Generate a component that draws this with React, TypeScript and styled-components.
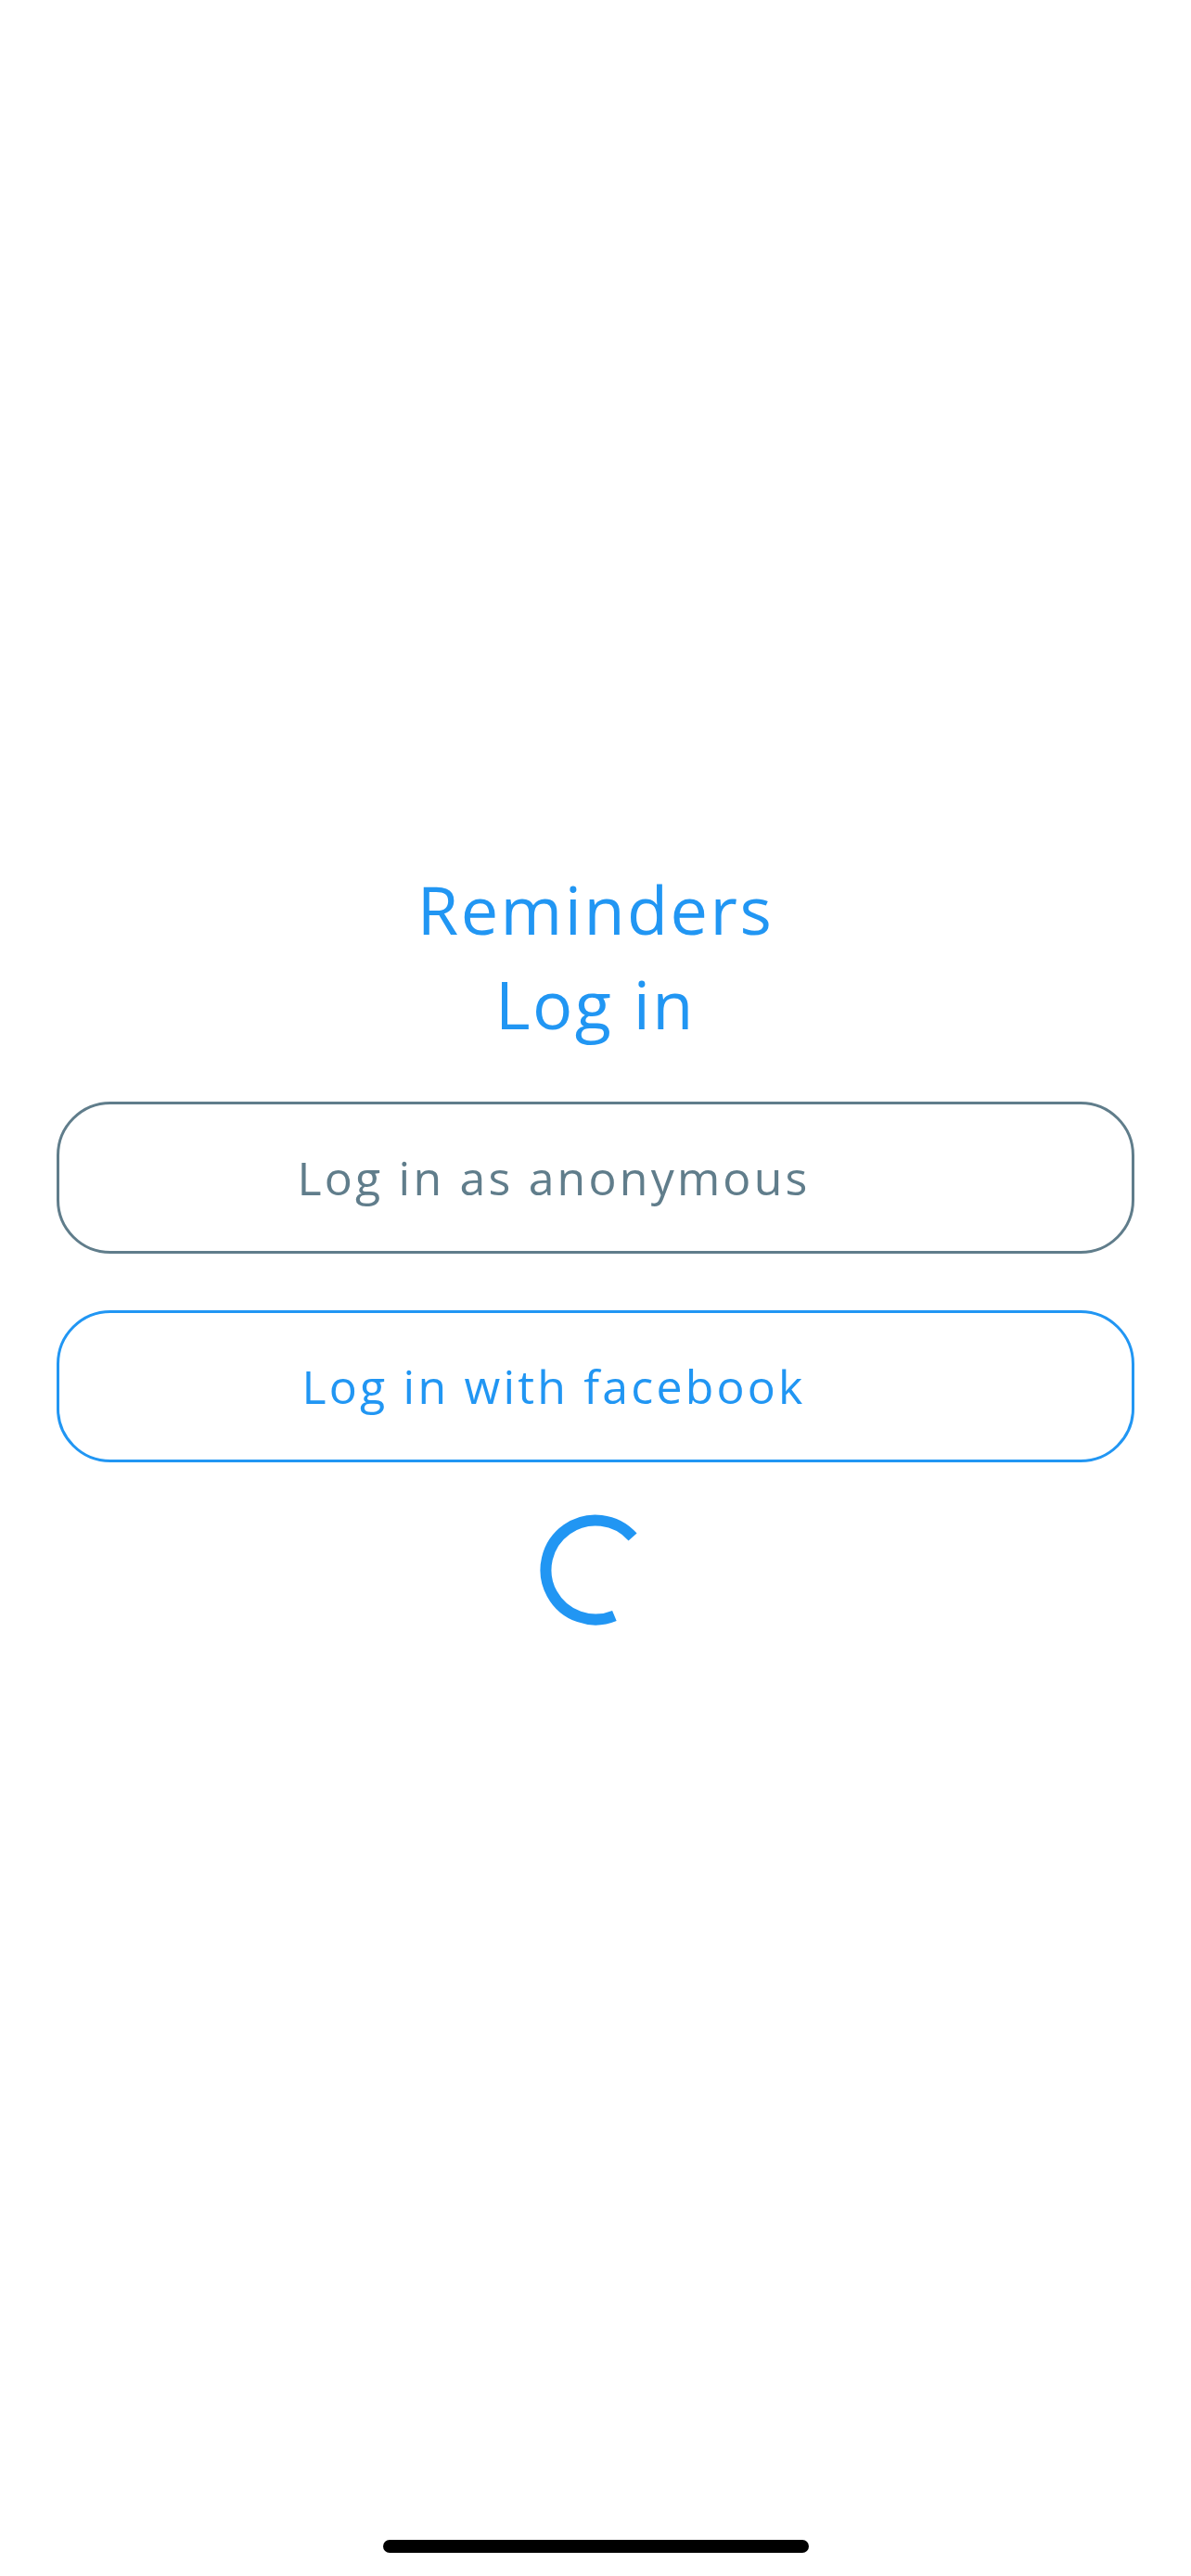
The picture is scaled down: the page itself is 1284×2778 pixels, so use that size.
import React from "react";
import styled, { createGlobalStyle } from "styled-components";

const GlobalStyle = createGlobalStyle`
  html, body {
    margin: 0;
    padding: 0;
    background: #ffffff;
  }
  body {
    font-family: "Open Sans", "Noto Sans", sans-serif;
  }
`;

const Page = styled.div`
  box-sizing: border-box;
  width: 1284px;
  height: 2778px;
  display: flex;
  flex-direction: column;
  align-items: center;
  padding-top: 929px;
  background: #ffffff;
`;

const Title = styled.h1`
  margin: 0;
  font-family: "Open Sans", "Noto Sans", sans-serif;
  font-weight: 500;
  font-size: 72px;
  line-height: 102px;
  letter-spacing: 2.5px;
  color: #2196f3;
  text-align: center;
`;

const Buttons = styled.div`
  margin-top: 55px;
  width: 1162px;
  display: flex;
  flex-direction: column;
  gap: 61px;
`;

const LoginButton = styled.button<{ $color: string }>`
  box-sizing: border-box;
  width: 100%;
  height: 164px;
  border: 3px solid ${(p) => p.$color};
  border-radius: 58px;
  background: #ffffff;
  color: ${(p) => p.$color};
  font-family: "Open Sans", "Noto Sans", sans-serif;
  font-weight: 400;
  font-size: 50px;
  letter-spacing: 3.2px;
  display: flex;
  align-items: center;
  justify-content: center;
  padding: 0 90px 0 0;
  cursor: pointer;
`;

const SpinnerWrap = styled.div`
  margin-top: 56px;
  width: 120px;
  height: 120px;
`;

const Spacer = styled.div`
  flex: 1;
`;

const HomeIndicator = styled.div`
  width: 459px;
  height: 14px;
  border-radius: 7px;
  background: #000000;
  margin-bottom: 25px;
`;

function Spinner() {
  const r = 53.5;
  const cx = 60;
  const cy = 60;
  const a1 = (67.6 * Math.PI) / 180;
  const a2 = (-41.5 * Math.PI) / 180;
  const x1 = cx + r * Math.cos(a1);
  const y1 = cy + r * Math.sin(a1);
  const x2 = cx + r * Math.cos(a2);
  const y2 = cy + r * Math.sin(a2);
  return (
    <svg width="120" height="120" viewBox="0 0 120 120">
      <path
        d={`M ${x1} ${y1} A ${r} ${r} 0 1 1 ${x2} ${y2}`}
        fill="none"
        stroke="#2196f3"
        strokeWidth="12"
      />
    </svg>
  );
}

export default function App() {
  return (
    <>
      <GlobalStyle />
      <Page>
        <Title>
          Reminders
          <br />
          Log in
        </Title>
        <Buttons>
          <LoginButton $color="#607d8b">Log in as anonymous</LoginButton>
          <LoginButton $color="#2196f3">Log in with facebook</LoginButton>
        </Buttons>
        <SpinnerWrap>
          <Spinner />
        </SpinnerWrap>
        <Spacer />
        <HomeIndicator />
      </Page>
    </>
  );
}
